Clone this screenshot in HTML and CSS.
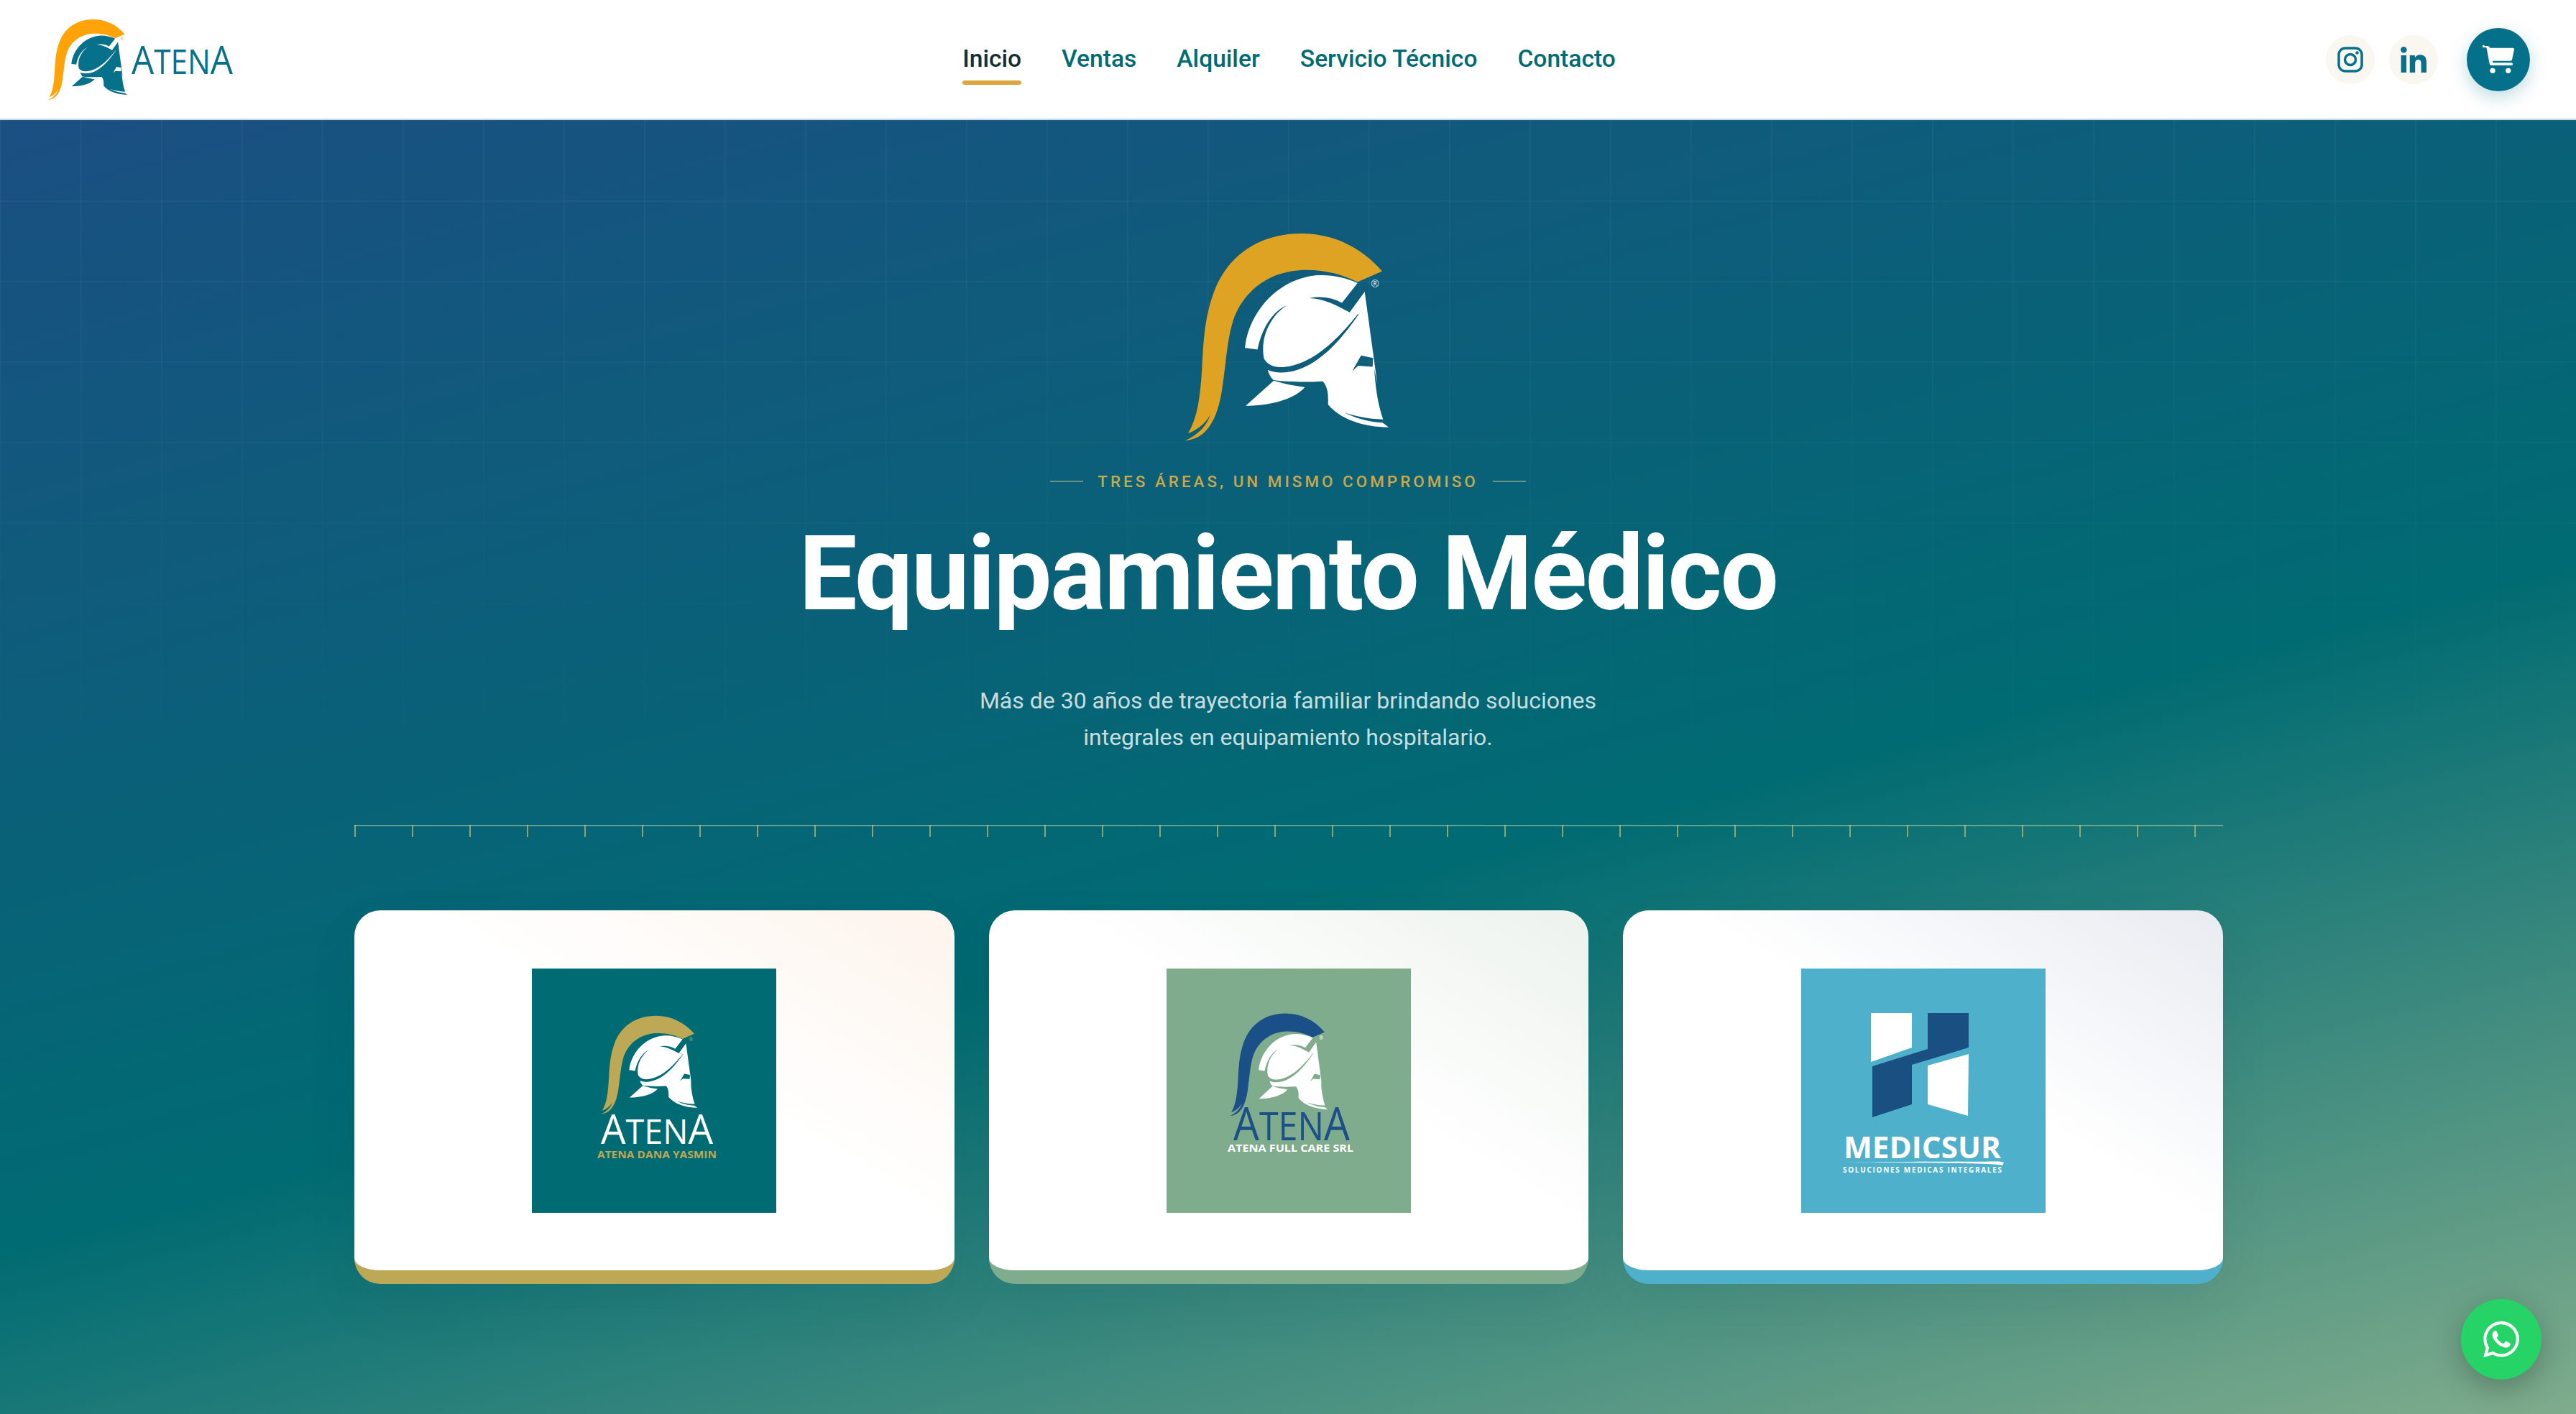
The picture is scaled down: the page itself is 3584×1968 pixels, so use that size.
FILE: index.html
```html
<!DOCTYPE html>
<html lang="es">
<head>
    <meta charset="UTF-8">
    <meta name="viewport" content="width=device-width, initial-scale=1.0">
    <title>Atena - Equipamiento Médico</title>
    <link rel="stylesheet" href="styles.css">
</head>
<body>
    <!-- Helmet used by every logo -->
    <svg class="sprite" aria-hidden="true">
        <defs>
            <g id="helmet">
                <path class="helmet-plume" d="M968 233C880 130 760 75 630 75C450 75 320 170 265 320C225 430 222 520 215 640C208 760 195 850 157 910C190 900 230 870 250 832C235 880 195 920 145 940C230 935 280 860 300 720C315 620 320 520 345 440C385 320 490 235 630 228C720 224 800 245 865 278Z"/>
                <path class="helmet-shell" d="M395 553C405 430 510 270 690 250C750 245 815 258 865 282L800 365C760 342 710 335 663 345C720 345 780 375 832 405L868 410C780 520 680 620 560 633C520 637 490 625 475 600C465 560 470 500 500 450C520 415 545 390 570 375C510 400 465 470 447 560Z"/>
                <path class="helmet-shell" fill-rule="evenodd" d="M895 318L832 405L870 412C790 530 690 640 570 655C540 658 510 655 490 645C495 665 505 680 515 688C560 695 640 698 720 693C745 720 742 760 742 790C790 850 890 885 995 885L970 866C910 862 850 845 808 822C850 838 910 850 972 852C950 790 940 720 935 640L948 705ZM880 585L930 595L928 632L868 628L843 650Z"/>
                <path class="helmet-shell" d="M515 690L398 795C470 795 590 780 645 718C610 712 570 708 540 697Z"/>
                <text class="helmet-mark" x="938" y="299">®</text>
            </g>
        </defs>
    </svg>

    <header class="site-header">
        <a class="brand" href="#">
            <svg class="brand-logo" viewBox="0 0 264 112">
                <use href="#helmet" transform="translate(-18.8 -9.7) scale(.1295)"/>
                <text class="brand-name" x="116" y="76" textLength="141" lengthAdjust="spacingAndGlyphs"><tspan class="big">A</tspan>TEN<tspan class="big">A</tspan></text>
            </svg>
        </a>

        <nav class="main-nav">
            <a class="nav-link active" href="#">Inicio</a>
            <a class="nav-link" href="#">Ventas</a>
            <a class="nav-link" href="#">Alquiler</a>
            <a class="nav-link" href="#">Servicio Técnico</a>
            <a class="nav-link" href="#">Contacto</a>
        </nav>

        <div class="header-actions">
            <a class="social-btn" href="#" aria-label="Instagram">
                <svg class="social-icon" viewBox="0 0 36 36">
                    <rect class="ig-line" x="2" y="2" width="32" height="32" rx="9"/>
                    <circle class="ig-line" cx="18" cy="18" r="7.5"/>
                    <circle class="ig-dot" cx="27.5" cy="8.5" r="2.2"/>
                </svg>
            </a>
            <a class="social-btn" href="#" aria-label="LinkedIn">
                <svg class="social-icon" viewBox="0 0 448 448">
                    <path d="M100.28 448H7.4V148.9h92.88zM53.79 108.1C24.09 108.1 0 83.5 0 53.8a53.79 53.79 0 0 1 107.58 0c0 29.7-24.1 54.3-53.79 54.3zM447.9 448h-92.68V302.4c0-34.7-.7-79.2-48.29-79.2-48.29 0-55.69 37.7-55.69 76.7V448h-92.78V148.9h89.08v40.8h1.3c12.4-23.5 42.69-48.3 87.88-48.3 94 0 111.28 61.9 111.28 142.3V448z"/>
                </svg>
            </a>
            <a class="cart-btn" href="#" aria-label="Carrito">
                <svg class="cart-icon" viewBox="820 185 135 120">
                    <path d="M829 188h12q8 0 10 8h95q7 0 6 7l-9 42q-1 5-7 5h-74l-1-4 2 12h78q5 0 5 5.500t-5 5.500h-84q-7 0-8-7l-12-64q-1-4-6-4h-7q-5 0-5-5.500t5-5.500z"/>
                    <circle cx="862" cy="291" r="11"/>
                    <circle cx="927" cy="291" r="11"/>
                </svg>
            </a>
        </div>
    </header>

    <main class="hero">
        <svg class="hero-logo" viewBox="145 75 850 865">
            <use href="#helmet"/>
        </svg>

        <p class="eyebrow">Tres áreas, un mismo compromiso</p>
        <h1 class="hero-title">Equipamiento Médico</h1>
        <p class="hero-text">Más de 30 años de trayectoria familiar brindando soluciones<br>integrales en equipamiento hospitalario.</p>

        <div class="ruler"></div>

        <section class="area-grid">
            <a class="area-card area-dana" href="#">
                <svg class="area-logo" viewBox="0 0 340 340">
                    <rect width="340" height="340"/>
                    <use href="#helmet" transform="translate(73 54) scale(.158)"/>
                    <text class="logo-name" x="96" y="244" textLength="156" lengthAdjust="spacingAndGlyphs"><tspan class="big">A</tspan>TEN<tspan class="big">A</tspan></text>
                    <text class="logo-sub" x="91" y="264" textLength="166" lengthAdjust="spacingAndGlyphs">ATENA DANA YASMIN</text>
                </svg>
            </a>
            <a class="area-card area-full" href="#">
                <svg class="area-logo" viewBox="0 0 340 340">
                    <rect width="340" height="340"/>
                    <use href="#helmet" transform="translate(65 50) scale(.16 .165)"/>
                    <text class="logo-name" x="93" y="239" textLength="162" lengthAdjust="spacingAndGlyphs"><tspan class="big">A</tspan>TEN<tspan class="big">A</tspan></text>
                    <text class="logo-sub" x="85" y="255" textLength="175" lengthAdjust="spacingAndGlyphs">ATENA FULL CARE SRL</text>
                </svg>
            </a>
            <a class="area-card area-medicsur" href="#">
                <svg class="area-logo" viewBox="0 0 340 340">
                    <rect width="340" height="340"/>
                    <polygon class="mark-light" points="97,62 154,62 154,110 97,130"/>
                    <polygon class="mark-dark" points="176,62 233,62 233,110 154,134 154,189 99,207 99,136 176,112"/>
                    <polygon class="mark-light" points="176,135 233,119 232,205 176,189"/>
                    <text class="medicsur-name" x="59" y="264" textLength="219" lengthAdjust="spacingAndGlyphs">MEDICSUR</text>
                    <path class="mark-light" d="M66 269.500C140 268.500 220 269 276 268.500L282 270L280 274C270 271 200 270.500 66 269.500Z"/>
                    <text class="medicsur-sub" x="58" y="284" textLength="221">SOLUCIONES MEDICAS INTEGRALES</text>
                </svg>
            </a>
        </section>
    </main>

    <a class="whatsapp-btn" href="#" aria-label="WhatsApp">
        <svg class="whatsapp-icon" viewBox="0 0 24 24">
            <path d="M17.472 14.382c-.297-.149-1.758-.867-2.03-.967-.273-.099-.471-.148-.67.15-.197.297-.767.966-.94 1.164-.173.199-.347.223-.644.075-.297-.15-1.255-.463-2.39-1.475-.883-.788-1.48-1.761-1.653-2.059-.173-.297-.018-.458.13-.606.134-.133.298-.347.446-.52.149-.174.198-.298.298-.497.099-.198.05-.371-.025-.52-.075-.149-.669-1.612-.916-2.207-.242-.579-.487-.5-.669-.51-.173-.008-.371-.01-.57-.01-.198 0-.52.074-.792.372-.272.297-1.04 1.016-1.04 2.479 0 1.462 1.065 2.875 1.213 3.074.149.198 2.096 3.2 5.077 4.487.709.306 1.262.489 1.694.625.712.227 1.36.195 1.871.118.571-.085 1.758-.719 2.006-1.413.248-.694.248-1.289.173-1.413-.074-.124-.272-.198-.57-.347m-5.421 7.403h-.004a9.87 9.87 0 01-5.031-1.378l-.361-.214-3.741.982.998-3.648-.235-.374a9.86 9.86 0 01-1.51-5.26c.001-5.45 4.436-9.884 9.888-9.884 2.64 0 5.122 1.03 6.988 2.898a9.825 9.825 0 012.893 6.994c-.003 5.45-4.437 9.884-9.885 9.884m8.413-18.297A11.815 11.815 0 0012.05 0C5.495 0 .16 5.335.157 11.892c0 2.096.547 4.142 1.588 5.945L.057 24l6.305-1.654a11.882 11.882 0 005.683 1.448h.005c6.554 0 11.89-5.335 11.893-11.893a11.821 11.821 0 00-3.48-8.413z"/>
        </svg>
    </a>
</body>
</html>
```
FILE: styles.css
```css
* {
    margin: 0;
    padding: 0;
    box-sizing: border-box;
}

body {
    font-family: Roboto, 'Liberation Sans', sans-serif;
    height: 100vh;
    display: flex;
    flex-direction: column;
    overflow: hidden;
    background: #fff;
}

a {
    text-decoration: none;
}

.sprite {
    display: none;
}

/* Helmet colours, set by each logo */
.helmet-plume {
    fill: var(--plume);
}

.helmet-shell {
    fill: var(--shell);
}

.helmet-mark {
    fill: var(--mark);
    font-family: 'Open Sans', sans-serif;
    font-size: 42px;
    text-anchor: middle;
}

/* Header */
.site-header {
    height: 167px;
    flex-shrink: 0;
    padding: 0 64px 0 67px;
    display: grid;
    grid-template-columns: 1fr auto 1fr;
    align-items: center;
    background: #fff;
    border-bottom: 2px solid #c6dbe4;
}

.brand {
    display: flex;
}

.brand-logo {
    width: 264px;
    height: 112px;
    --plume: #ffa309;
    --shell: #07708a;
    --mark: #ffa309;
}

.brand-name {
    font-family: 'Open Sans', sans-serif;
    font-size: 47px;
    fill: #07708a;
}

.big {
    font-size: 1.17em;
}

.main-nav {
    display: flex;
    gap: 56px;
}

.nav-link {
    position: relative;
    top: -1px;
    color: #006b72;
    font-size: 33.6px;
    font-weight: 500;
    line-height: 38px;
}

.nav-link.active {
    color: #15302f;
}

.nav-link.active::after {
    content: "";
    position: absolute;
    left: 0;
    right: 0;
    bottom: -17px;
    height: 6px;
    border-radius: 3px;
    background: #dca63e;
}

.header-actions {
    display: flex;
    align-items: center;
    justify-content: flex-end;
    gap: 20px;
}

.social-btn {
    width: 68px;
    height: 68px;
    border-radius: 50%;
    background: #faf7f1;
    display: flex;
    align-items: center;
    justify-content: center;
    fill: #07708a;
}

.social-icon {
    width: 36px;
    height: 36px;
}

.ig-line {
    fill: none;
    stroke: #07708a;
    stroke-width: 3.5;
}

.ig-dot {
    fill: #07708a;
}

.cart-btn {
    width: 88px;
    height: 88px;
    margin-left: 20px;
    border-radius: 50%;
    background: #04708a;
    box-shadow: 0 8px 24px rgba(4, 112, 138, 0.25);
    display: flex;
    align-items: center;
    justify-content: center;
    fill: #fff;
}

.cart-icon {
    width: 45px;
    height: 40px;
}

/* Hero */
.hero {
    position: relative;
    flex: 1;
    padding-top: 158px;
    display: flex;
    flex-direction: column;
    align-items: center;
    background: linear-gradient(165deg, #1a4f82 0%, #006b72 57%, #7fac8c 100%);
}

.hero::before {
    content: "";
    position: absolute;
    inset: 0;
    background-image:
        linear-gradient(rgba(255, 255, 255, 0.04) 2px, transparent 2px),
        linear-gradient(90deg, rgba(255, 255, 255, 0.04) 2px, transparent 2px);
    background-size: 112px 112px;
    -webkit-mask-image: linear-gradient(to bottom, #000 0%, transparent 55%);
    mask-image: linear-gradient(to bottom, #000 0%, transparent 55%);
}

.hero > * {
    position: relative;
}

.hero-logo {
    width: 283px;
    height: 288px;
    margin-right: 4px;
    --plume: #dfa324;
    --shell: #fff;
    --mark: #d5e4ea;
}

.eyebrow {
    margin-top: 43px;
    display: flex;
    align-items: center;
    gap: 20px;
    color: #c9a84a;
    font-size: 22.4px;
    font-weight: 500;
    line-height: 28px;
    letter-spacing: 0.18em;
    text-transform: uppercase;
}

.eyebrow::before,
.eyebrow::after {
    content: "";
    width: 46px;
    height: 2px;
    background: rgba(200, 200, 150, 0.5);
}

.hero-title {
    margin-top: 35px;
    color: #fff;
    font-size: 144px;
    font-weight: 700;
    line-height: 160px;
    letter-spacing: -0.015em;
}

.hero-text {
    margin-top: 71px;
    color: rgba(255, 255, 255, 0.78);
    font-size: 32px;
    line-height: 51px;
    text-align: center;
}

/* Ticks under the intro */
.ruler {
    width: 2600px;
    height: 17px;
    margin: 96px 0 0 2px;
    background:
        linear-gradient(rgba(190, 215, 170, 0.5), rgba(190, 215, 170, 0.5)) 0 0 / 100% 2px no-repeat,
        repeating-linear-gradient(90deg, rgba(200, 190, 100, 0.7) 0 2px, transparent 2px 80px);
}

/* Company cards */
.area-grid {
    width: 2600px;
    margin: 102px 0 0 2px;
    display: grid;
    grid-template-columns: repeat(3, 1fr);
    gap: 48px;
}

.area-card {
    height: 520px;
    padding-top: 81px;
    display: flex;
    justify-content: center;
    border-radius: 36px;
    border-bottom: 19px solid;
    box-shadow: 0 30px 70px rgba(0, 50, 60, 0.08);
}

.area-logo {
    width: 340px;
    height: 340px;
    display: block;
}

.area-dana {
    border-color: #bda855;
    background: linear-gradient(to top right, #fff 55%, #fdf4ec 100%);
}

.area-dana .area-logo {
    fill: #006b72;
    --plume: #bda855;
    --shell: #fff;
    --mark: #bda855;
}

.area-full {
    border-color: #7fac8c;
    background: linear-gradient(to top right, #fff 55%, #ecf2ed 100%);
}

.area-full .area-logo {
    fill: #7fac8c;
    --plume: #1a4f87;
    --shell: #fff;
    --mark: #fff;
}

.area-medicsur {
    border-color: #4fb0cb;
    background: linear-gradient(to top right, #fff 55%, #e8ebf1 100%);
}

.area-medicsur .area-logo {
    fill: #4fb0cb;
}

.logo-name {
    font-family: 'Open Sans', sans-serif;
    font-size: 48px;
    fill: #fff;
}

.area-full .logo-name {
    font-size: 54px;
    fill: #1a4f87;
}

.logo-sub {
    font-family: 'Open Sans', sans-serif;
    font-size: 15px;
    font-weight: 700;
    fill: #bda855;
}

.area-full .logo-sub {
    fill: #fff;
}

.mark-light {
    fill: #fff;
}

.mark-dark {
    fill: #1a4f82;
}

.medicsur-name {
    font-family: 'Open Sans', sans-serif;
    font-size: 42px;
    font-weight: 700;
    fill: #fff;
}

.medicsur-sub {
    font-family: 'Open Sans', sans-serif;
    font-size: 10px;
    font-weight: 700;
    fill: #fff;
}

/* Floating WhatsApp button */
.whatsapp-btn {
    position: fixed;
    right: 48px;
    bottom: 48px;
    width: 112px;
    height: 112px;
    border-radius: 50%;
    background: #25d366;
    box-shadow: 0 12px 40px rgba(0, 0, 0, 0.25);
    display: flex;
    align-items: center;
    justify-content: center;
    fill: #fff;
}

.whatsapp-icon {
    width: 50px;
    height: 50px;
}
```
